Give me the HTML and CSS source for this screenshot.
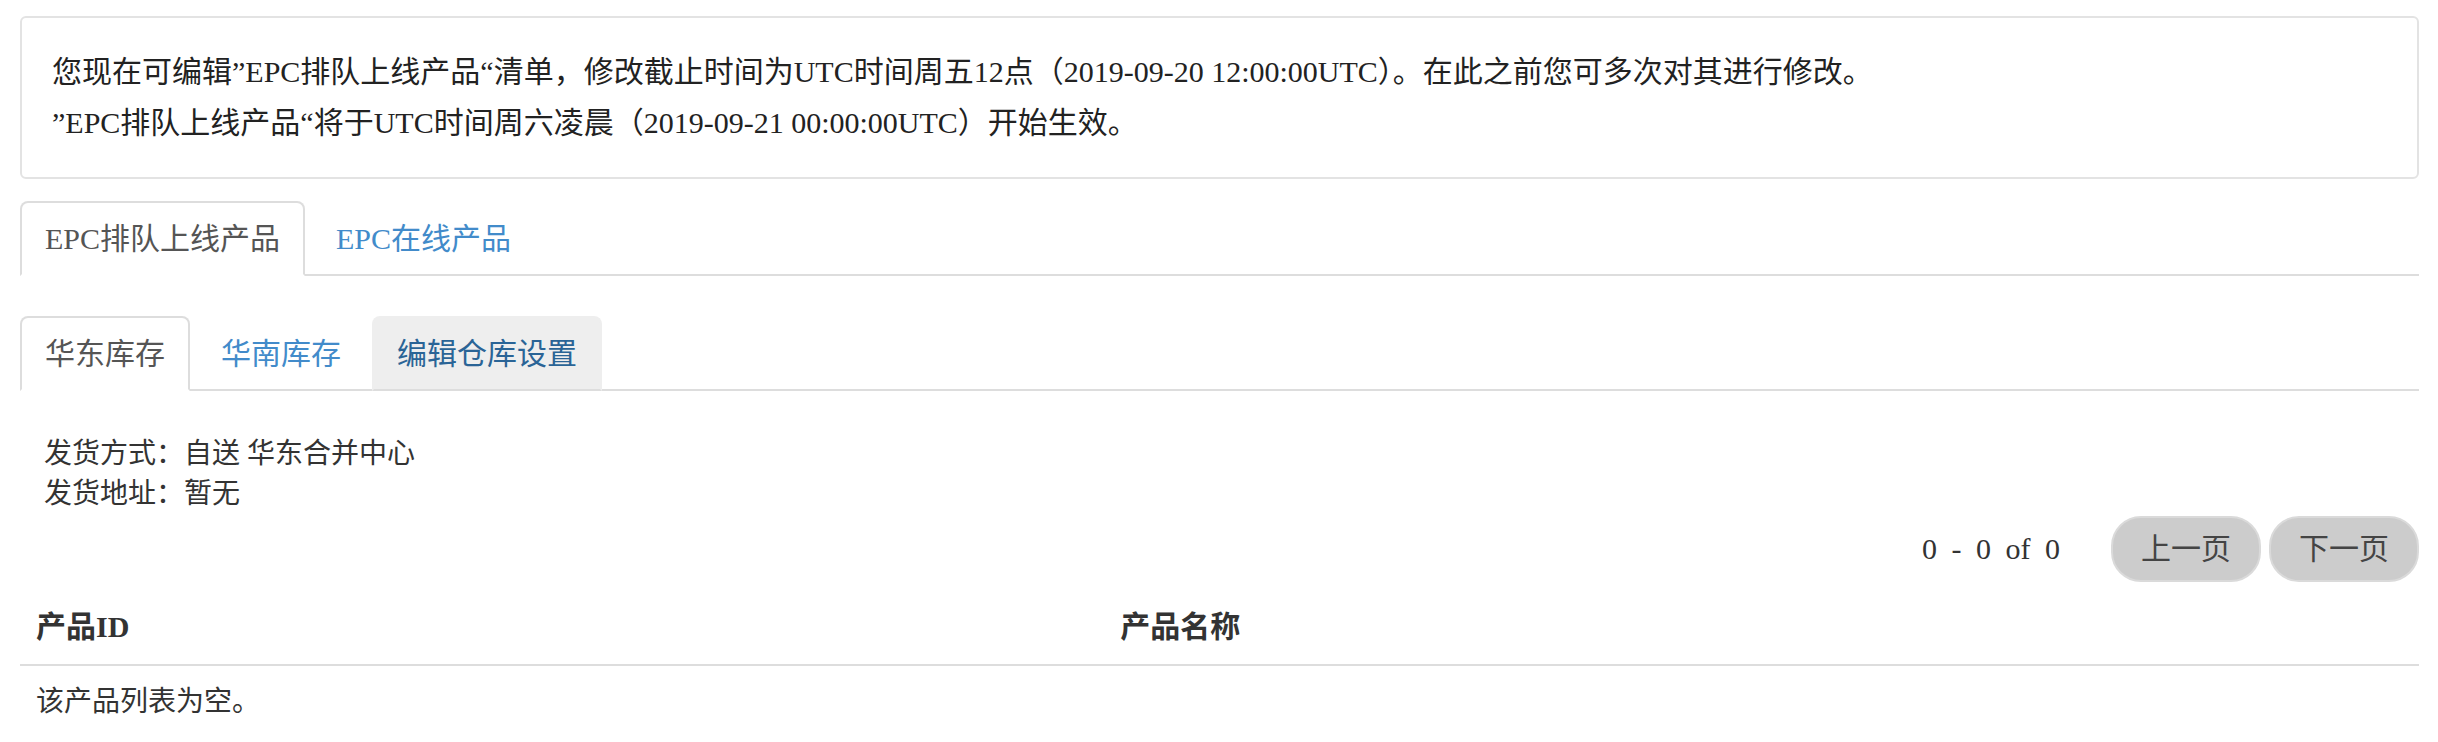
FILE: index.html
```html
<!DOCTYPE html>
<html lang="zh-CN">
<head>
<meta charset="utf-8">
<title>EPC排队上线产品</title>
<link rel="stylesheet" href="styles.css">
</head>
<body>
<div class="page">
  <div class="notice">
    <p class="notice-line">您现在可编辑”EPC排队上线产品“清单，修改截止时间为UTC时间周五12点（2019-09-20 12:00:00UTC）。在此之前您可多次对其进行修改。</p>
    <p class="notice-line">”EPC排队上线产品“将于UTC时间周六凌晨（2019-09-21 00:00:00UTC）开始生效。</p>
  </div>

  <ul class="tabs tabs-main">
    <li class="tab active">EPC排队上线产品</li>
    <li class="tab link">EPC在线产品</li>
  </ul>

  <ul class="tabs tabs-sub">
    <li class="tab active">华东库存</li>
    <li class="tab link">华南库存</li>
    <li class="tab hover">编辑仓库设置</li>
  </ul>

  <div class="info">
    <div class="info-line">发货方式：自送 华东合并中心</div>
    <div class="info-line">发货地址：暂无</div>
  </div>

  <div class="pager">
    <span class="pager-count">0 - 0 of 0</span>
    <button class="pager-btn">上一页</button>
    <button class="pager-btn">下一页</button>
  </div>

  <table class="products">
    <thead>
      <tr>
        <th class="col-id">产品ID</th>
        <th class="col-name">产品名称</th>
      </tr>
    </thead>
    <tbody>
      <tr>
        <td colspan="2">该产品列表为空。</td>
      </tr>
    </tbody>
  </table>
</div>
</body>
</html>
```

FILE: styles.css
```css
* {
  box-sizing: border-box;
}

html, body {
  margin: 0;
  padding: 0;
  background: #ffffff;
}

body {
  font-family: "Liberation Serif", "Noto Sans CJK SC", serif;
  color: #333333;
}

.page {
  padding: 16px 19px 0 20px;
}

.notice {
  border: 2px solid #e3e3e3;
  border-radius: 6px;
  padding: 28px 30px 29px 30px;
  background: #ffffff;
}

.notice-line {
  margin: 0;
  font-size: 30px;
  line-height: 51px;
  color: #222222;
  white-space: nowrap;
}

.tabs {
  list-style: none;
  margin: 0;
  padding: 0;
  display: flex;
  border-bottom: 2px solid #dddddd;
}

.tabs-main {
  margin-top: 22px;
}

.tabs-sub {
  margin-top: 40px;
}

.tab {
  margin-right: 6px;
  margin-bottom: -2px;
  padding: 14px 23px;
  border: 2px solid transparent;
  border-radius: 8px 8px 0 0;
  font-size: 30px;
  line-height: 43px;
  white-space: nowrap;
}

.tab.active {
  color: #555555;
  background: #ffffff;
  border-color: #dddddd #dddddd transparent #dddddd;
}

.tab.link {
  color: #428bca;
}

.tab.hover {
  color: #2a6496;
  background: #eeeeee;
  border-color: #eeeeee #eeeeee #dddddd #eeeeee;
}

.info {
  margin-top: 43px;
  padding-left: 24px;
}

.info-line {
  font-size: 28px;
  line-height: 40px;
  color: #333333;
}

.pager {
  display: flex;
  justify-content: flex-end;
  align-items: center;
  margin-top: 2px;
}

.pager-count {
  font-size: 30px;
  line-height: 42px;
  word-spacing: 7px;
  color: #333333;
  margin-right: 51px;
}

.pager-btn {
  font-family: "Liberation Serif", "Noto Sans CJK SC", serif;
  font-size: 30px;
  line-height: 42px;
  height: 66px;
  width: 150px;
  padding: 0;
  margin-left: 8px;
  background: #cccccc;
  border: 2px solid #dadada;
  border-radius: 30px;
  color: #444444;
}

.pager-btn:first-of-type {
  margin-left: 0;
}

.products {
  width: 100%;
  margin-top: 7px;
  border-collapse: collapse;
}

.products th {
  text-align: left;
  padding: 16px;
  font-size: 30px;
  line-height: 43px;
  font-weight: bold;
  color: #333333;
  border-bottom: 2px solid #dddddd;
}

.products .col-id {
  width: 45.2%;
}

.products td {
  padding: 16px;
  font-size: 28px;
  line-height: 40px;
  color: #333333;
}
```
